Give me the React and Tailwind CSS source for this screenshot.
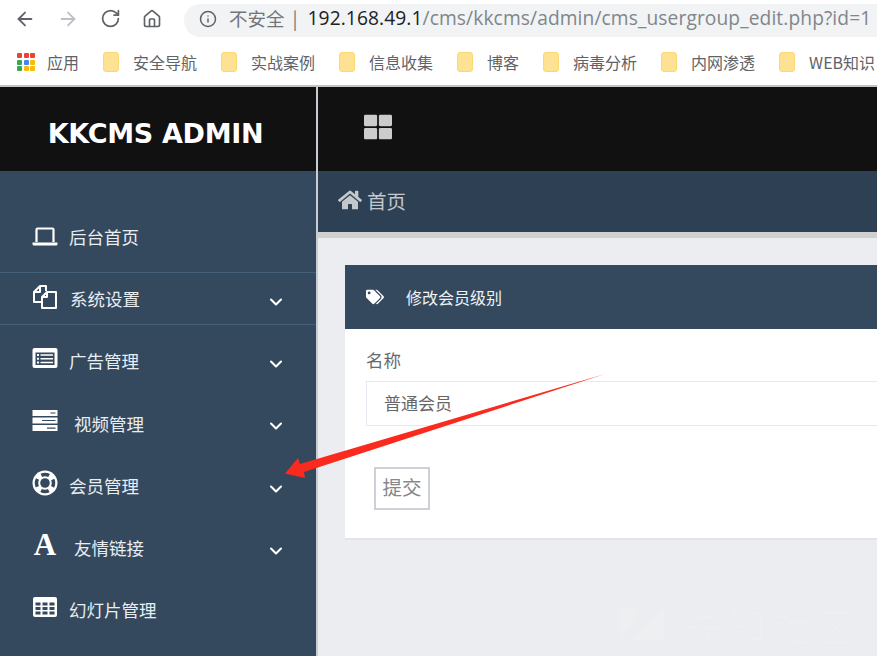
import React from 'react';
import { ArrowLeft, ArrowRight, RotateCw, Home, Info, ChevronDown } from 'lucide-react';
import { FaThLarge, FaHome, FaTags } from 'react-icons/fa';

const CJK = "font-['Noto_Sans_CJK_SC','Noto_Sans',sans-serif]";
const DARK = '#35495e';

const BOOKMARKS = ['安全导航', '实战案例', '信息收集', '博客', '病毒分析', '内网渗透', 'WEB知识'];
const APP_DOTS = [
    'bg-[#ea4335]', 'bg-[#ea4335]', 'bg-[#ea4335]',
    'bg-[#34a853]', 'bg-[#4285f4]', 'bg-[#fbbc05]',
    'bg-[#34a853]', 'bg-[#fbbc05]', 'bg-[#fbbc05]',
];

const LaptopIcon = () => (
    <svg width="26" height="20" viewBox="0 0 26 20" fill="none">
        <path d="M4.500 15V2.500A1 1 0 0 1 5.500 1.500H20.500A1 1 0 0 1 21.500 2.500V15" stroke="white" strokeWidth="2.200" />
        <path d="M0.500 15.500H25.500V17A1.500 1.500 0 0 1 24 18.500H2A1.500 1.500 0 0 1 0.500 17Z" fill="white" />
    </svg>
);

const CopyIcon = () => (
    <svg width="26" height="26" viewBox="0 0 26 26" fill="none" stroke="white" strokeWidth="2" strokeLinejoin="round">
        <path d="M9 18H2V8L8 2H14V7" />
        <path d="M8 2V8H2" />
        <path d="M10 24V13L15 8H24V24Z" />
        <path d="M15 8V13H10" />
    </svg>
);

const ListIcon = () => (
    <svg width="26" height="20" viewBox="0 0 26 20">
        <rect x="0.500" y="0" width="25" height="20" rx="2" fill="white" />
        <rect x="3.500" y="4.500" width="19" height="12.500" fill={DARK} />
        <path d="M5 6H7V8H5ZM5 9.800H7V11.800H5ZM5 13.500H7V15.500H5ZM8.500 6.300H21V7.700H8.500ZM8.500 10.100H21V11.500H8.500ZM8.500 13.800H21V15.200H8.500Z" fill="white" />
    </svg>
);

const ServerIcon = () => (
    <svg width="26" height="21" viewBox="0 0 26 21">
        <rect x="0.500" y="0" width="25" height="6" fill="white" />
        <rect x="0.500" y="7.500" width="25" height="6" fill="white" />
        <rect x="0.500" y="15" width="25" height="6" fill="white" />
        <path d="M18.500 2.400H23.500V3.600H18.500ZM10 10H23.500V11H10ZM15 17.500H23.500V18.700H15Z" fill={DARK} />
    </svg>
);

const RingIcon = () => (
    <svg width="26" height="26" viewBox="0 0 26 26" fill="none">
        <circle cx="13" cy="13" r="12.500" fill="white" />
        <circle cx="13" cy="13" r="8.500" stroke={DARK} strokeWidth="3.500" strokeDasharray="8 5.350" strokeDashoffset="4" />
        <circle cx="13" cy="13" r="4.800" fill={DARK} />
    </svg>
);

const TableIcon = () => (
    <svg width="24" height="20" viewBox="0 0 24 20">
        <rect x="0" y="0" width="24" height="20" rx="2" fill="white" />
        <path d="M2.500 5.500H7.500V8.500H2.500ZM9.500 5.500H14.500V8.500H9.500ZM16.500 5.500H21.500V8.500H16.500ZM2.500 10H7.500V13H2.500ZM9.500 10H14.500V13H9.500ZM16.500 10H21.500V13H16.500ZM2.500 14.500H7.500V17.500H2.500ZM9.500 14.500H14.500V17.500H9.500ZM16.500 14.500H21.500V17.500H16.500Z" fill={DARK} />
    </svg>
);

const FontIcon = () => (
    <span className="font-['Liberation_Serif',serif] font-bold text-[31px] leading-none text-white">A</span>
);

const MENU = [
    { label: '广告管理', icon: <ListIcon />, arrow: true },
    { label: '视频管理', icon: <ServerIcon />, arrow: true, wide: true },
    { label: '会员管理', icon: <RingIcon />, arrow: true },
    { label: '友情链接', icon: <FontIcon />, arrow: true, wide: true },
    { label: '幻灯片管理', icon: <TableIcon /> },
];

const MenuRow = ({ item }) => (
    <div className="flex items-center h-[62.25px] pl-[32px] pr-[32px] text-[#e8edf2]">
        <div className="w-[26px] flex justify-center -translate-y-[3px]">{item.icon}</div>
        <span className={`text-[17.5px] leading-none ${item.wide ? 'ml-[16px]' : 'ml-[11px]'}`}>{item.label}</span>
        {item.arrow && <ChevronDown size={20} strokeWidth={2.5} color="white" className="ml-auto translate-y-[3px] translate-x-[2px]" />}
    </div>
);

const BrowserBar = () => (
    <div className="h-[85px] bg-white shrink-0 overflow-hidden">
        <div className="flex items-center h-[43px] pt-[2px]">
            <div className="flex items-center w-[184px] pl-[14px] gap-[21px] -translate-y-[4px]">
                <ArrowLeft size={22} color="#5f6368" strokeWidth={2} />
                <ArrowRight size={22} color="#bdc1c6" strokeWidth={2} />
                <RotateCw size={21} color="#5f6368" strokeWidth={2} />
                <Home size={20} color="#5f6368" strokeWidth={2} />
            </div>
            <div className="flex items-center flex-1 h-[33px] -mt-[5px] pb-[3px] bg-[#f1f3f4] rounded-l-full pl-[15px] whitespace-nowrap overflow-hidden">
                <Info size={18} color="#5f6368" strokeWidth={2} />
                <span className="ml-[12px] text-[18.5px] text-[#70757a]">不安全</span>
                <span className="ml-[8px] text-[18.5px] text-[#70757a]">|</span>
                <span className="ml-[10px] text-[19.2px] tracking-[0.1px] font-['Open_Sans',sans-serif] text-[#202124]">192.168.49.1</span>
                <span className="text-[19.2px] tracking-[0.1px] font-['Open_Sans',sans-serif] text-[#80868b]">/cms/kkcms/admin/cms_usergroup_edit.php?id=1</span>
            </div>
        </div>
        <div className="flex items-center h-[42px] pl-[17px] -mt-[2px] whitespace-nowrap text-[16px] text-[#5f6368]">
            <div className="grid grid-cols-3 gap-[1.5px] w-[18px] shrink-0">
                {APP_DOTS.map((c, i) => (
                    <span key={i} className={`h-[5px] rounded-[1px] ${c}`} />
                ))}
            </div>
            <span className="ml-[12px] mr-[24px]">应用</span>
            {BOOKMARKS.map(name => (
                <div key={name} className="flex items-center shrink-0 mr-[24px]">
                    <span className="w-[16px] h-[20px] rounded-[3px] bg-[#fde293] border border-[#fbd872]" />
                    <span className="ml-[14px]">{name}</span>
                </div>
            ))}
        </div>
    </div>
);

const Sidebar = () => (
    <aside className="w-[318px] shrink-0 flex flex-col border-r-2 border-[#c9ced4] bg-[#35495e]">
        <div className="h-[84px] bg-[#111111] flex items-center justify-center pr-[5px] pt-[10px]">
            <span className="font-['DejaVu_Sans',sans-serif] font-bold text-[27px] tracking-[-0.3px] text-white">KKCMS ADMIN</span>
        </div>
        <div className="flex items-center h-[101px] pt-[30px] pl-[32px] text-[#e8edf2]">
            <LaptopIcon />
            <span className="ml-[11px] text-[17.5px] leading-none">后台首页</span>
        </div>
        <div className="flex items-center h-[53px] pl-[32px] pr-[32px] border-y border-[#456079] text-[#e8edf2]">
            <div className="w-[26px] -translate-y-[2px]"><CopyIcon /></div>
            <span className="ml-[12px] text-[17.5px] leading-none">系统设置</span>
            <ChevronDown size={20} strokeWidth={2.5} color="white" className="ml-auto translate-y-[3px] translate-x-[2px]" />
        </div>
        <div className="pt-[5px]">
            {MENU.map(item => (
                <MenuRow key={item.label} item={item} />
            ))}
        </div>
    </aside>
);

const Content = () => (
    <main className="flex-1 min-w-0 flex flex-col bg-[#ebedf0] relative overflow-hidden">
        <div className="h-[84px] bg-[#111111] flex items-center pl-[46px] shrink-0">
            <FaThLarge size={28} color="#cccccc" className="-translate-y-[2px]" />
        </div>
        <div className="h-[61px] bg-[#2e4053] flex items-center pl-[20px] shrink-0 text-[#c4c8cc]">
            <FaHome size={24} className="-translate-y-[2px]" />
            <span className="ml-[5px] text-[19.5px] -translate-y-[1px]">首页</span>
        </div>
        <div className="h-[6px] bg-[#cfd0d0] shrink-0" />
        <div className="pt-[27px] pl-[27px]">
            <div className="w-[700px] bg-white border-b-2 border-[#e2e4e9]">
                <div className="h-[64px] bg-[#35495e] flex items-center pl-[21px] text-white">
                    <FaTags size={18} />
                    <span className="ml-[22px] text-[16px] text-[#eef2f5]">修改会员级别</span>
                </div>
                <div className="pl-[21px] pt-[20px] pb-[28px]">
                    <div className="text-[17.5px] leading-[24px] text-[#666b70] -translate-y-[1px]">名称</div>
                    <input
                        readOnly
                        value="普通会员"
                        className={`${CJK} block w-full h-[45px] mt-[8px] px-[17px] pb-[3px] border border-[#e6e8f2] text-[17px] text-[#666666] outline-none`}
                    />
                    <button className={`${CJK} block w-[56px] h-[43px] mt-[41px] ml-[8px] pb-[4px] border-2 border-[#cfcfd6] bg-white text-[19.5px] leading-none text-[#85888c]`}>
                        提交
                    </button>
                </div>
            </div>
        </div>
        <div className="absolute left-[302px] top-[517px] flex items-center select-none">
            <svg width="46" height="42" viewBox="0 0 46 42">
                <path d="M0 3H22L0 38Z" fill="#eeeff1" />
                <path d="M44 0V36H12Z" fill="#eeeff1" />
            </svg>
            <span className="ml-[18px] text-[38px] leading-none tracking-[6px] font-light text-[#eeeff1]">先知社区</span>
        </div>
    </main>
);

const App = () => (
    <div className={`${CJK} relative w-[877px] h-[656px] flex flex-col overflow-hidden bg-white`}>
        <BrowserBar />
        <div className="h-[2px] bg-[#c4c4c4] shrink-0" />
        <div className="flex flex-1 min-h-0">
            <Sidebar />
            <Content />
        </div>
        {/* red annotation arrow */}
        <svg className="absolute inset-0 pointer-events-none" width="877" height="656" viewBox="0 0 877 656">
            <path d="M605 374L300 464L298 458L285 473.500L305 478L304 472Z" fill="#fb2a1e" />
        </svg>
    </div>
);

export default App;
